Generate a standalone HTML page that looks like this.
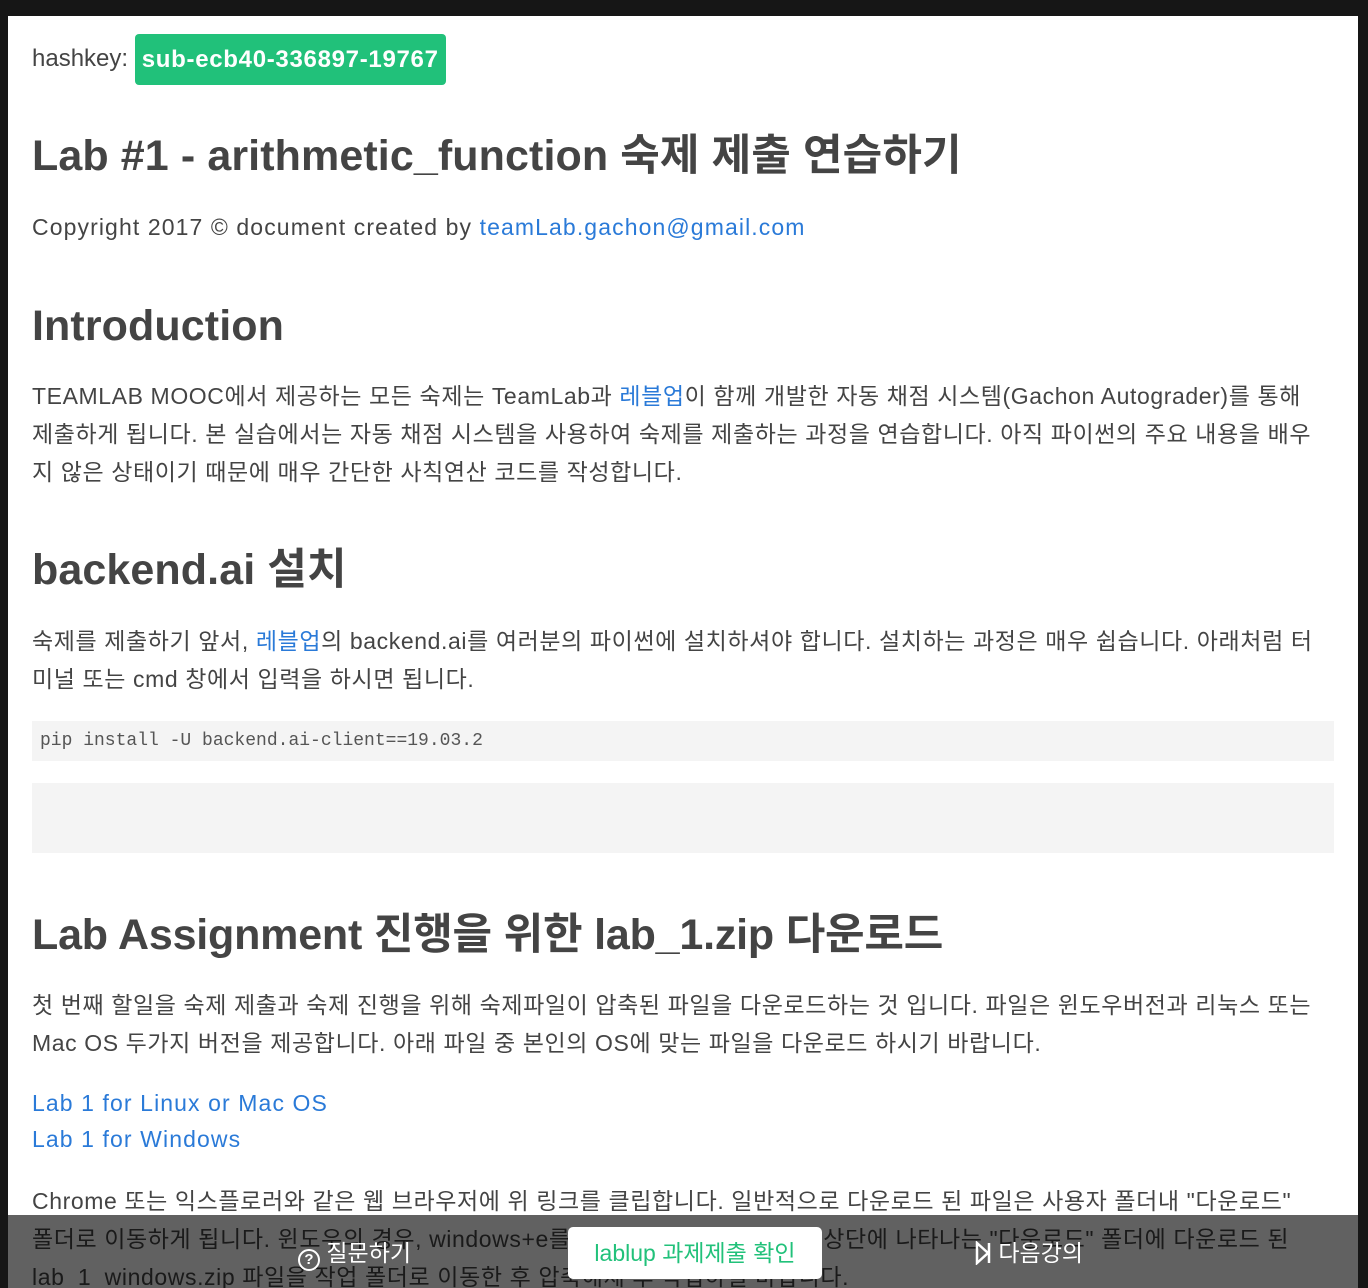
<!DOCTYPE html>
<html><head><meta charset="utf-8"><style>
*{margin:0;padding:0;box-sizing:border-box}
html,body{width:1368px;height:1288px;overflow:hidden;background:#161616}
#pg{position:absolute;left:8px;top:16px;width:1350px;height:1272px;background:#fff;overflow:hidden;color:#444;font-family:"Liberation Sans","Noto Sans CJK KR",sans-serif}
.a{position:absolute;left:24px;white-space:nowrap}
.p{font-size:23px;line-height:38px;letter-spacing:0.6px}
.l{letter-spacing:1.1px}
h1,h2{font-family:"Liberation Sans","Noto Sans CJK KR",sans-serif;font-weight:700;color:#444;white-space:nowrap;position:absolute;left:24px}
h1{font-size:43px;letter-spacing:0.1px}
h2{font-size:43px;letter-spacing:0.1px}
a{color:#2a7ad8;text-decoration:none}
.key{display:inline-block;background:#21c17a;color:#fff;font-weight:700;border-radius:4px;padding:0 7px;height:51px;line-height:51px;font-size:24px;vertical-align:middle;letter-spacing:0.7px}
.code{position:absolute;left:24px;width:1302px;background:#f4f4f4}
#bar{position:absolute;left:0;top:1199px;width:1350px;height:73px;background:rgba(0,0,0,0.62)}
.btn{position:absolute;color:#fff;font-size:23px;font-family:"Liberation Sans","Noto Sans CJK KR",sans-serif}
</style></head><body><div id="pg">
<div class="a" style="top:17px;font-size:24px;line-height:51px">hashkey: <span class="key">sub-ecb40-336897-19767</span></div>
<h1 style="top:110px;line-height:60px">Lab #1 - arithmetic_function 숙제 제출 연습하기</h1>
<div class="a p l" style="top:192px">Copyright 2017 © document created by <a>teamLab.gachon@gmail.com</a></div>
<h2 style="top:280px;line-height:60px">Introduction</h2>
<div class="a p" style="top:361px">TEAMLAB MOOC에서 제공하는 모든 숙제는 TeamLab과 <a>레블업</a>이 함께 개발한 자동 채점 시스템(Gachon Autograder)를 통해<br>제출하게 됩니다. 본 실습에서는 자동 채점 시스템을 사용하여 숙제를 제출하는 과정을 연습합니다. 아직 파이썬의 주요 내용을 배우<br>지 않은 상태이기 때문에 매우 간단한 사칙연산 코드를 작성합니다.</div>
<h2 style="top:524px;line-height:60px">backend.ai 설치</h2>
<div class="a p" style="top:606px">숙제를 제출하기 앞서, <a>레블업</a>의 backend.ai를 여러분의 파이썬에 설치하셔야 합니다. 설치하는 과정은 매우 쉽습니다. 아래처럼 터<br>미널 또는 cmd 창에서 입력을 하시면 됩니다.</div>
<div class="code" style="top:705px;height:40px;font-family:'Liberation Mono',monospace;font-size:18px;line-height:40px;padding-left:8px;color:#555">pip install -U backend.ai-client==19.03.2</div>
<div class="code" style="top:767px;height:70px"></div>
<h2 style="top:889px;line-height:60px;letter-spacing:-0.2px">Lab Assignment 진행을 위한 lab_1.zip 다운로드</h2>
<div class="a p" style="top:970px">첫 번째 할일을 숙제 제출과 숙제 진행을 위해 숙제파일이 압축된 파일을 다운로드하는 것 입니다. 파일은 윈도우버전과 리눅스 또는<br>Mac OS 두가지 버전을 제공합니다. 아래 파일 중 본인의 OS에 맞는 파일을 다운로드 하시기 바랍니다.</div>
<div class="a p l" style="top:1069px;line-height:36px"><a>Lab 1 for Linux or Mac OS</a><br><a>Lab 1 for Windows</a></div>
<div class="a p" style="top:1166px">Chrome 또는 익스플로러와 같은 웹 브라우저에 위 링크를 클립합니다. 일반적으로 다운로드 된 파일은 사용자 폴더내 "다운로드"<br>폴더로 이동하게 됩니다. 윈도우의 경우, windows+e를 누르면 나오는 탐색기 창 상단에 나타나는 "다운로드" 폴더에 다운로드 된<br>lab_1_windows.zip 파일을 작업 폴더로 이동한 후 압축해제 후 작업하길 바랍니다.</div>
<div id="bar"></div>
<div class="btn" style="left:290px;top:1222px;line-height:30px"><span style="display:inline-block;width:22px;height:22px;border:2px solid #fff;border-radius:50%;font-size:15px;line-height:18px;text-align:center;font-weight:700;vertical-align:-3px">?</span> 질문하기</div>
<div style="position:absolute;left:560px;top:1211px;width:254px;height:52px;background:#fff;border-radius:5px;color:#21c17a;font-size:23px;line-height:52px;text-align:center">lablup 과제제출 확인</div>
<div class="btn" style="left:966px;top:1222px;line-height:30px"><svg width="18" height="24" viewBox="0 0 18 24" style="vertical-align:-4px"><path d="M3 2 L14 12 L3 22 Z M15 2 V22" fill="none" stroke="#fff" stroke-width="2.5"/></svg> 다음강의</div>
</div></body></html>
